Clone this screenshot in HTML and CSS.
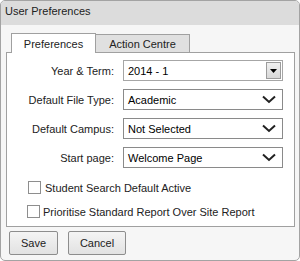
FILE: index.html
```html
<!DOCTYPE html>
<html>
<head>
    <meta charset="UTF-8">
    <title>User Preferences</title>
    <link rel="stylesheet" href="styles.css">
</head>
<body>
    <div class="dialog">
        <div class="dialog-title">User Preferences</div>

        <div class="dialog-body">
            <div class="tabs">
                <div class="tab active">Preferences</div>
                <div class="tab">Action Centre</div>
            </div>

            <div class="panel">
                <div class="form-row">
                    <span class="form-label">Year &amp; Term:</span>
                    <div class="combo">
                        <span class="combo-value">2014 - 1</span>
                        <span class="combo-btn">
                            <svg width="7" height="4" viewBox="0 0 7 4"><polygon points="0,0 7,0 3.5,4" fill="#000"></polygon></svg>
                        </span>
                    </div>
                </div>

                <div class="form-row">
                    <span class="form-label">Default File Type:</span>
                    <div class="select">
                        <span class="select-value">Academic</span>
                        <svg class="chevron" width="14" height="9" viewBox="0 0 14 9"><polyline points="1,1.5 7,7 13,1.5" fill="none" stroke="#222" stroke-width="2"></polyline></svg>
                    </div>
                </div>

                <div class="form-row">
                    <span class="form-label">Default Campus:</span>
                    <div class="select">
                        <span class="select-value">Not Selected</span>
                        <svg class="chevron" width="14" height="9" viewBox="0 0 14 9"><polyline points="1,1.5 7,7 13,1.5" fill="none" stroke="#222" stroke-width="2"></polyline></svg>
                    </div>
                </div>

                <div class="form-row">
                    <span class="form-label">Start page:</span>
                    <div class="select">
                        <span class="select-value">Welcome Page</span>
                        <svg class="chevron" width="14" height="9" viewBox="0 0 14 9"><polyline points="1,1.5 7,7 13,1.5" fill="none" stroke="#222" stroke-width="2"></polyline></svg>
                    </div>
                </div>

                <div class="checks">
                    <label class="check first"><span class="box"></span>Student Search Default Active</label>
                    <label class="check"><span class="box"></span>Prioritise Standard Report Over Site Report</label>
                </div>
            </div>

            <div class="buttons">
                <button class="btn save">Save</button>
                <button class="btn cancel">Cancel</button>
            </div>
        </div>
    </div>
</body>
</html>
```

FILE: styles.css
```css
body {
    margin: 0;
    font-family: "Liberation Sans", Arial, sans-serif;
    font-size: 11px;
    color: #000;
    background-color: white;
}

.dialog {
    width: 300px;
    height: 261px;
    box-sizing: border-box;
    border: 1px solid #a3a3a3;
    border-radius: 5px;
    overflow: hidden;
    display: flex;
    flex-direction: column;
    background-color: #f6f6f6;
}

.dialog-title {
    height: 24px;
    line-height: 21px;
    padding-left: 4px;
    color: #222;
    background-color: #dcdcdc;
}

.dialog-body {
    flex: 1;
    padding: 8px 4px 0 5px;
}

.tabs {
    display: flex;
    padding-left: 5px;
    height: 19px;
    align-items: flex-end;
    position: relative;
    z-index: 1;
}

.tab {
    height: 18px;
    line-height: 18px;
    box-sizing: border-box;
    border: 1px solid #a0a0a0;
    border-bottom: none;
    background-color: #e0e0e0;
    color: #222;
}

.tab.active {
    height: 20px;
    line-height: 21px;
    width: 85px;
    text-align: center;
    background-color: white;
    margin-bottom: -1px;
}

.tab:not(.active) {
    width: 94px;
    text-align: center;
    border-left: none;
}

.panel {
    height: 175px;
    box-sizing: border-box;
    border: 1px solid #a0a0a0;
    background-color: white;
    padding: 7px 11px 0 0;
}

.form-row {
    display: flex;
    align-items: center;
    height: 21px;
    margin-bottom: 8px;
}

.form-label {
    width: 107px;
    text-align: right;
    margin-right: 9px;
    color: #222;
}

.combo,
.select {
    width: 160px;
    height: 21px;
    box-sizing: border-box;
    border: 1px solid #8a8a8a;
    display: flex;
    align-items: center;
    background-color: white;
}

.combo-value,
.select-value {
    flex: 1;
    padding-left: 4px;
}

.combo {
    border-color: #a6a6a6;
}

.combo-btn {
    width: 15px;
    height: 17px;
    margin-right: 1px;
    box-sizing: border-box;
    border: 1px solid #9c9c9c;
    background: linear-gradient(#f0f0f0, #d8d8d8);
    display: flex;
    align-items: center;
    justify-content: center;
}

.chevron {
    margin-right: 6px;
}

.checks {
    display: flex;
    flex-direction: column;
    gap: 11px;
    padding-top: 5px;
}

.check {
    display: flex;
    align-items: center;
    gap: 3px;
    margin-left: 20px;
    color: #222;
}

.check.first {
    margin-left: 21px;
    gap: 4px;
}

.box {
    width: 13px;
    height: 13px;
    box-sizing: border-box;
    border: 1px solid #8e8e8e;
    background-color: white;
}

.buttons {
    display: flex;
    gap: 10px;
    padding: 4px 0 0 3px;
}

.btn {
    height: 24px;
    box-sizing: border-box;
    border: 1px solid #8d8d8d;
    border-radius: 2px;
    background: linear-gradient(#f4f4f4, #e2e2e2);
    font-family: "Liberation Sans", Arial, sans-serif;
    font-size: 11px;
    color: #222;
    padding: 0;
}

.save {
    width: 49px;
}

.cancel {
    width: 58px;
}
```
